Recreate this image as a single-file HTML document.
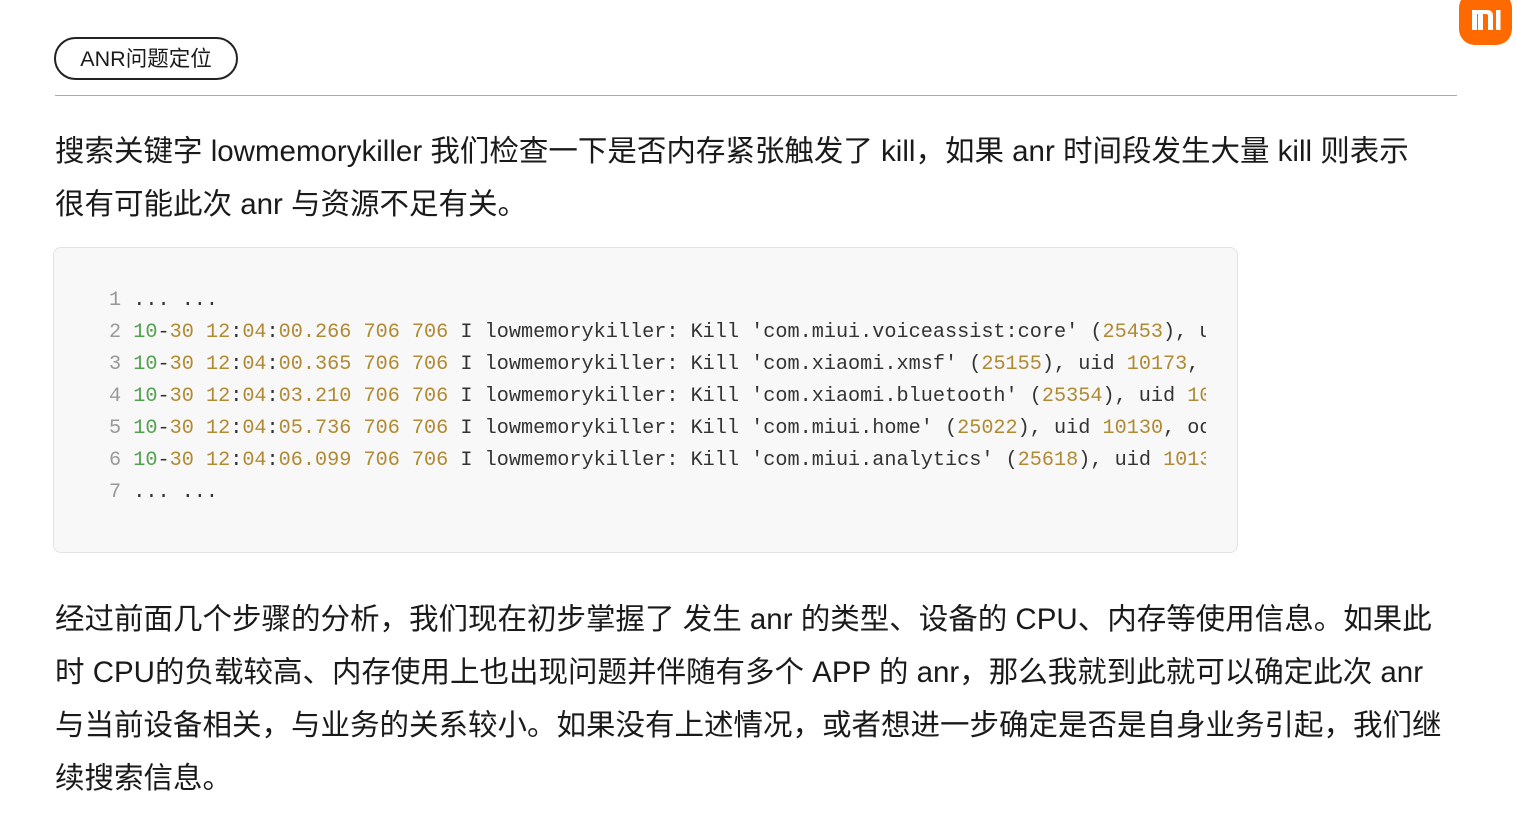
<!DOCTYPE html>
<html><head><meta charset="utf-8"><style>
body{margin:0;width:1516px;height:827px;background:#fff;overflow:hidden;position:relative;font-family:"Liberation Sans","Noto Sans CJK SC",sans-serif;color:#1a1a1a}
.tag{position:absolute;left:54px;top:37px;width:184px;height:43px;border:2px solid #222;border-radius:22px;box-sizing:border-box;font-size:21.5px;line-height:40px;text-align:center}
.hr{position:absolute;left:55px;top:95px;width:1402px;height:1px;background:#aaa}
.logo{position:absolute;left:1459px;top:-8px;width:53px;height:53px;background:#ff6a00;border-radius:16px}
.p{position:absolute;left:55px;font-size:29.5px;line-height:53px;width:1460px}
.code{position:absolute;left:53px;top:247px;width:1185px;height:306px;border:1px solid #e3e3e3;border-radius:8px;background:#f8f8f8;box-sizing:border-box;overflow:hidden}
pre{margin:0;position:absolute;left:55px;top:37px;font-family:"Liberation Mono",monospace;font-size:20.2px;line-height:32px;color:#333;white-space:pre;width:1097px;overflow:hidden}
.n{color:#999}.g{color:#50a14f}.y{color:#b08a32}
</style></head><body>
<div class="tag">ANR问题定位</div>
<div class="hr"></div>
<div class="logo"><svg width="53" height="53" viewBox="0 0 53 53"><path d="M13 18h15q6 0 6 6v14h-5V24q0-2-2-2h-3v16h-5V22h-1v16h-5z" fill="#fff"/><rect x="37" y="18" width="4.5" height="20" fill="#fff"/></svg></div>
<div class="p" style="top:125px">搜索关键字 lowmemorykiller 我们检查一下是否内存紧张触发了 kill，如果 anr 时间段发生大量 kill 则表示<br>很有可能此次 anr 与资源不足有关。</div>
<div class="code"><pre><span class="n">1</span> ... ...
<span class="n">2</span> <span class="g">10</span>-<span class="y">30 12</span>:<span class="y">04</span>:<span class="y">00.266 706 706</span> I lowmemorykiller: Kill 'com.miui.voiceassist:core' (<span class="y">25453</span>), uid
<span class="n">3</span> <span class="g">10</span>-<span class="y">30 12</span>:<span class="y">04</span>:<span class="y">00.365 706 706</span> I lowmemorykiller: Kill 'com.xiaomi.xmsf' (<span class="y">25155</span>), uid <span class="y">10173</span>, oom
<span class="n">4</span> <span class="g">10</span>-<span class="y">30 12</span>:<span class="y">04</span>:<span class="y">03.210 706 706</span> I lowmemorykiller: Kill 'com.xiaomi.bluetooth' (<span class="y">25354</span>), uid <span class="y">1002</span>
<span class="n">5</span> <span class="g">10</span>-<span class="y">30 12</span>:<span class="y">04</span>:<span class="y">05.736 706 706</span> I lowmemorykiller: Kill 'com.miui.home' (<span class="y">25022</span>), uid <span class="y">10130</span>, oom
<span class="n">6</span> <span class="g">10</span>-<span class="y">30 12</span>:<span class="y">04</span>:<span class="y">06.099 706 706</span> I lowmemorykiller: Kill 'com.miui.analytics' (<span class="y">25618</span>), uid <span class="y">10137</span>
<span class="n">7</span> ... ...</pre></div>
<div class="p" style="top:593px">经过前面几个步骤的分析，我们现在初步掌握了 发生 anr 的类型、设备的 CPU、内存等使用信息。如果此<br>时 CPU的负载较高、内存使用上也出现问题并伴随有多个 APP 的 anr，那么我就到此就可以确定此次 anr<br>与当前设备相关，与业务的关系较小。如果没有上述情况，或者想进一步确定是否是自身业务引起，我们继<br>续搜索信息。</div>
</body></html>
